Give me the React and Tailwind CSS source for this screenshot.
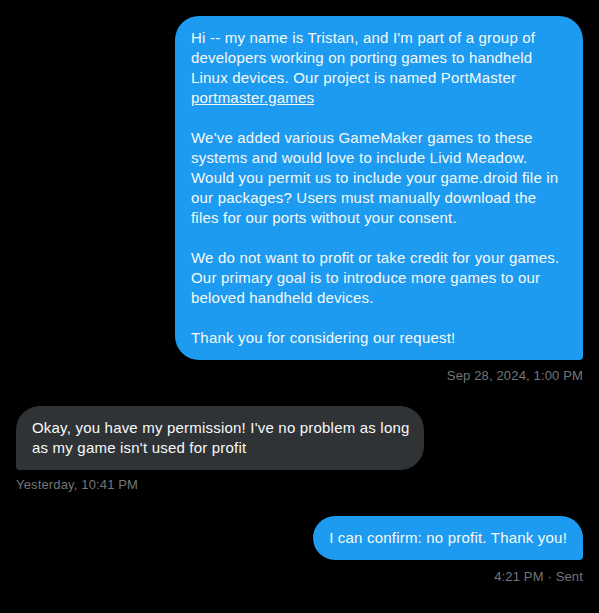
export default function App() {
  const font = { fontFamily: '"Liberation Sans", Arial, sans-serif' };
  return (
    <div className="min-h-[613px] w-full bg-black px-4 pt-4 text-[15px] leading-5 tracking-[0.2px] text-[#f7f9f9]" style={font}>
      <div className="flex flex-col items-end">
        <div className="w-[408px] whitespace-nowrap rounded-3xl rounded-br-[4px] bg-[#1d9bf0] px-4 py-3">
          <div>Hi -- my name is Tristan, and I'm part of a group of</div>
          <div>developers working on porting games to handheld</div>
          <div>Linux devices. Our project is named PortMaster</div>
          <div><span className="underline">portmaster.games</span></div>
          <div>&nbsp;</div>
          <div>We've added various GameMaker games to these</div>
          <div>systems and would love to include Livid Meadow.</div>
          <div>Would you permit us to include your game.droid file in</div>
          <div>our packages? Users must manually download the</div>
          <div>files for our ports without your consent.</div>
          <div>&nbsp;</div>
          <div>We do not want to profit or take credit for your games.</div>
          <div>Our primary goal is to introduce more games to our</div>
          <div>beloved handheld devices.</div>
          <div>&nbsp;</div>
          <div>Thank you for considering our request!</div>
        </div>
        <div className="mt-2 text-[13px] leading-4 tracking-[0.15px] text-[#71767b]">Sep 28, 2024, 1:00 PM</div>
      </div>

      <div className="mt-[22px] flex flex-col items-start">
        <div className="w-[408px] whitespace-nowrap rounded-3xl rounded-bl-[4px] bg-[#2f3336] px-4 py-3">
          <div>Okay, you have my permission! I've no problem as long</div>
          <div>as my game isn't used for profit</div>
        </div>
        <div className="mt-[7px] text-[13px] leading-4 tracking-[0.15px] text-[#71767b]">Yesterday, 10:41 PM</div>
      </div>

      <div className="mt-[23px] flex flex-col items-end">
        <div className="whitespace-nowrap rounded-3xl rounded-br-[4px] bg-[#1d9bf0] px-4 py-3">
          I can confirm: no profit. Thank you!
        </div>
        <div className="mt-[9px] text-[13px] leading-4 tracking-[0.15px] text-[#71767b]">4:21 PM · Sent</div>
      </div>
    </div>
  );
}
